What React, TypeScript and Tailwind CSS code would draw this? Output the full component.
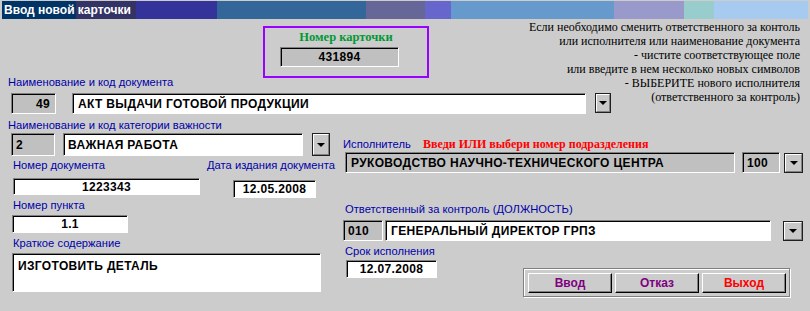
import React from "react";

const sunkenWhite =
  "border border-t-[#808080] border-l-[#808080] border-b-white border-r-white shadow-[inset_1px_1px_0_#000] bg-white";
const sunkenGrey =
  "border border-t-[#808080] border-l-[#808080] border-b-white border-r-white shadow-[inset_1px_1px_0_#000] bg-[#c0c0c0]";
const fieldText = "text-[12px] font-bold text-black tracking-[0.35px] leading-none";
const label = "h-[14px] leading-[14px] text-[11.2px] text-[#0000a8] whitespace-nowrap";
const serif = "[font-family:'Liberation_Serif','Times_New_Roman',serif]";

function Drop({ w, h }: { w: number; h: number }) {
  return (
    <div
      className="border border-[#202020] flex"
      style={{ width: w, height: h }}
    >
      <div className="flex-1 border border-t-white border-l-white border-b-[#808080] border-r-[#808080] bg-[#c8c8c8] flex items-center justify-center">
        <div className="w-0 h-0 border-x-[4px] border-x-transparent border-t-[4px] border-t-black" />
      </div>
    </div>
  );
}

function Btn({ children, color }: { children: React.ReactNode; color: string }) {
  return (
    <div
      className={`w-[84px] h-[20px] border border-t-white border-l-white border-b-black border-r-black shadow-[inset_-1px_-1px_0_#808080] bg-[#cccccc] flex items-center justify-center text-[12px] font-bold ${color}`}
    >
      {children}
    </div>
  );
}

export default function App() {
  return (
    <div className="w-[810px] h-[311px] bg-[#cccccc] overflow-hidden pt-[1px] [font-family:'Liberation_Sans',Arial,sans-serif]">
      {/* title bar */}
      <div className="mx-[2px] h-[18px] pl-[2px] text-white font-bold text-[12px] leading-[18px] bg-[linear-gradient(to_right,#003366_74px,#333366_74px,#333366_134px,#333399_134px,#333399_215px,#336699_215px,#336699_364px,#666699_364px,#666699_423px,#6666cc_423px,#6666cc_449px,#6699cc_449px,#6699cc_612px,#9999cc_612px,#9999cc_682px,#99cccc_682px,#99cccc_712px,#a6caf0_712px)]">
        Ввод новой карточки
      </div>

      {/* top section */}
      <div className="flex">
        <div className="w-[612px] shrink-0">
          <div className="ml-[263px] mt-[7px] w-[166px] h-[52px] border-2 border-[#9900ff]">
            <div className={`${serif} mt-[2px] text-center text-[12.5px] leading-[14px] font-bold text-[#009933]`}>
              Номер карточки
            </div>
            <div className={`${sunkenGrey} ml-[15px] mt-[3px] w-[119px] h-[20px] flex items-center justify-center ${fieldText}`}>
              431894
            </div>
          </div>
          <div className={`${label} ml-[8px] -mt-[3px]`}>Наименование и код документа</div>
          <div className="flex items-start mt-[4px]">
            <div className={`${sunkenGrey} ml-[11px] w-[45px] h-[21px] flex items-center justify-end pr-[5px] ${fieldText}`}>
              49
            </div>
            <div className={`${sunkenWhite} ml-[16px] w-[514px] h-[21px] flex items-center pl-[5px] ${fieldText}`}>
              АКТ ВЫДАЧИ ГОТОВОЙ ПРОДУКЦИИ
            </div>
            <div className="ml-[9px]">
              <Drop w={16} h={20} />
            </div>
          </div>
        </div>
        <div className={`${serif} -ml-[112px] w-[301px] pr-[1px] mt-[1px] text-right text-[12px] leading-[14px] text-black whitespace-nowrap`}>
          <div>Если необходимо сменить ответственного за контоль</div>
          <div>или исполнителя или наименование документа</div>
          <div>- чистите соответствующее поле</div>
          <div>или введите в нем несколько новых символов</div>
          <div>- ВЫБЕРИТЕ нового исполнителя</div>
          <div>(ответственного за контроль)</div>
        </div>
      </div>

      {/* bottom section */}
      <div className="flex">
        {/* left column */}
        <div className="w-[335px] shrink-0">
          <div className={`${label} ml-[8px] mt-[4px]`}>Наименование и код категории важности</div>
          <div className="flex items-start mt-[1px]">
            <div className={`${sunkenGrey} ml-[11px] w-[44px] h-[23px] flex items-center pl-[4px] ${fieldText}`}>
              2
            </div>
            <div className={`${sunkenWhite} ml-[8px] w-[240px] h-[23px] flex items-center pl-[4px] ${fieldText}`}>
              ВАЖНАЯ РАБОТА
            </div>
            <div className="ml-[9px]">
              <Drop w={18} h={23} />
            </div>
          </div>
          <div className="flex items-start">
            <div className="ml-[13px] w-[187px]">
              <div className={`${label} mt-[2px]`}>Номер документа</div>
              <div className={`${sunkenWhite} mt-[6px] w-[187px] h-[17px] flex items-center justify-center ${fieldText}`}>
                1223343
              </div>
            </div>
            <div className="ml-[7px]">
              <div className={`${label} mt-[2px]`}>Дата издания документа</div>
              <div className={`${sunkenWhite} ml-[26px] mt-[8px] w-[83px] h-[18px] flex items-center justify-center ${fieldText}`}>
                12.05.2008
              </div>
            </div>
          </div>
          <div className={`${label} ml-[13px]`}>Номер пункта</div>
          <div className={`${sunkenWhite} ml-[12px] mt-[3px] w-[116px] h-[18px] flex items-center justify-center ${fieldText}`}>
            1.1
          </div>
          <div className={`${label} ml-[13px] mt-[3px]`}>Краткое содержание</div>
          <div className={`${sunkenWhite} ml-[12px] mt-[3px] w-[309px] h-[39px] pl-[5px] pt-[6px] ${fieldText}`}>
            ИЗГОТОВИТЬ ДЕТАЛЬ
          </div>
        </div>

        {/* right column */}
        <div className="flex-1">
          <div className="flex items-baseline mt-[23px] ml-[8px] h-[14px]">
            <div className={`${label} w-[80px]`}>Исполнитель</div>
            <div className={`${serif} text-[12px] leading-[14px] font-bold text-[#ff0000] whitespace-nowrap`}>
              Введи ИЛИ выбери номер подразделения
            </div>
          </div>
          <div className="flex items-start mt-[1px]">
            <div className={`${sunkenGrey} ml-[10px] w-[390px] h-[21px] flex items-center pl-[5px] ${fieldText}`}>
              РУКОВОДСТВО НАУЧНО-ТЕХНИЧЕСКОГО ЦЕНТРА
            </div>
            <div className={`${sunkenGrey} ml-[7px] w-[38px] h-[21px] flex items-center pl-[4px] ${fieldText}`}>
              100
            </div>
            <div className="ml-[4px] mt-[1px]">
              <Drop w={19} h={20} />
            </div>
          </div>
          <div className={`${label} ml-[10px] mt-[29px]`}>Ответственный за контроль (ДОЛЖНОСТЬ)</div>
          <div className="flex items-start mt-[4px]">
            <div className={`${sunkenGrey} ml-[8px] w-[40px] h-[21px] flex items-center pl-[4px] ${fieldText}`}>
              010
            </div>
            <div className={`${sunkenWhite} ml-[2px] w-[386px] h-[21px] flex items-center pl-[5px] ${fieldText}`}>
              ГЕНЕРАЛЬНЫЙ ДИРЕКТОР ГРПЗ
            </div>
            <div className="ml-[12px] mt-[1px]">
              <Drop w={20} h={20} />
            </div>
          </div>
          <div className={`${label} ml-[10px] mt-[3px]`}>Срок исполнения</div>
          <div className="flex items-start">
            <div className={`${sunkenWhite} ml-[11px] mt-[2px] w-[91px] h-[18px] flex items-center justify-center ${fieldText}`}>
              12.07.2008
            </div>
            <div className="ml-[86px] mt-[10px] w-[267px] h-[29px] border border-[#808080] shadow-[inset_1px_1px_0_#fff,1px_1px_0_#fff] flex items-start gap-[3px] pl-[4px] pt-[4px]">
              <Btn color="text-[#800080]">Ввод</Btn>
              <Btn color="text-[#800080]">Отказ</Btn>
              <Btn color="text-[#ff0000]">Выход</Btn>
            </div>
          </div>
        </div>
      </div>
    </div>
  );
}
